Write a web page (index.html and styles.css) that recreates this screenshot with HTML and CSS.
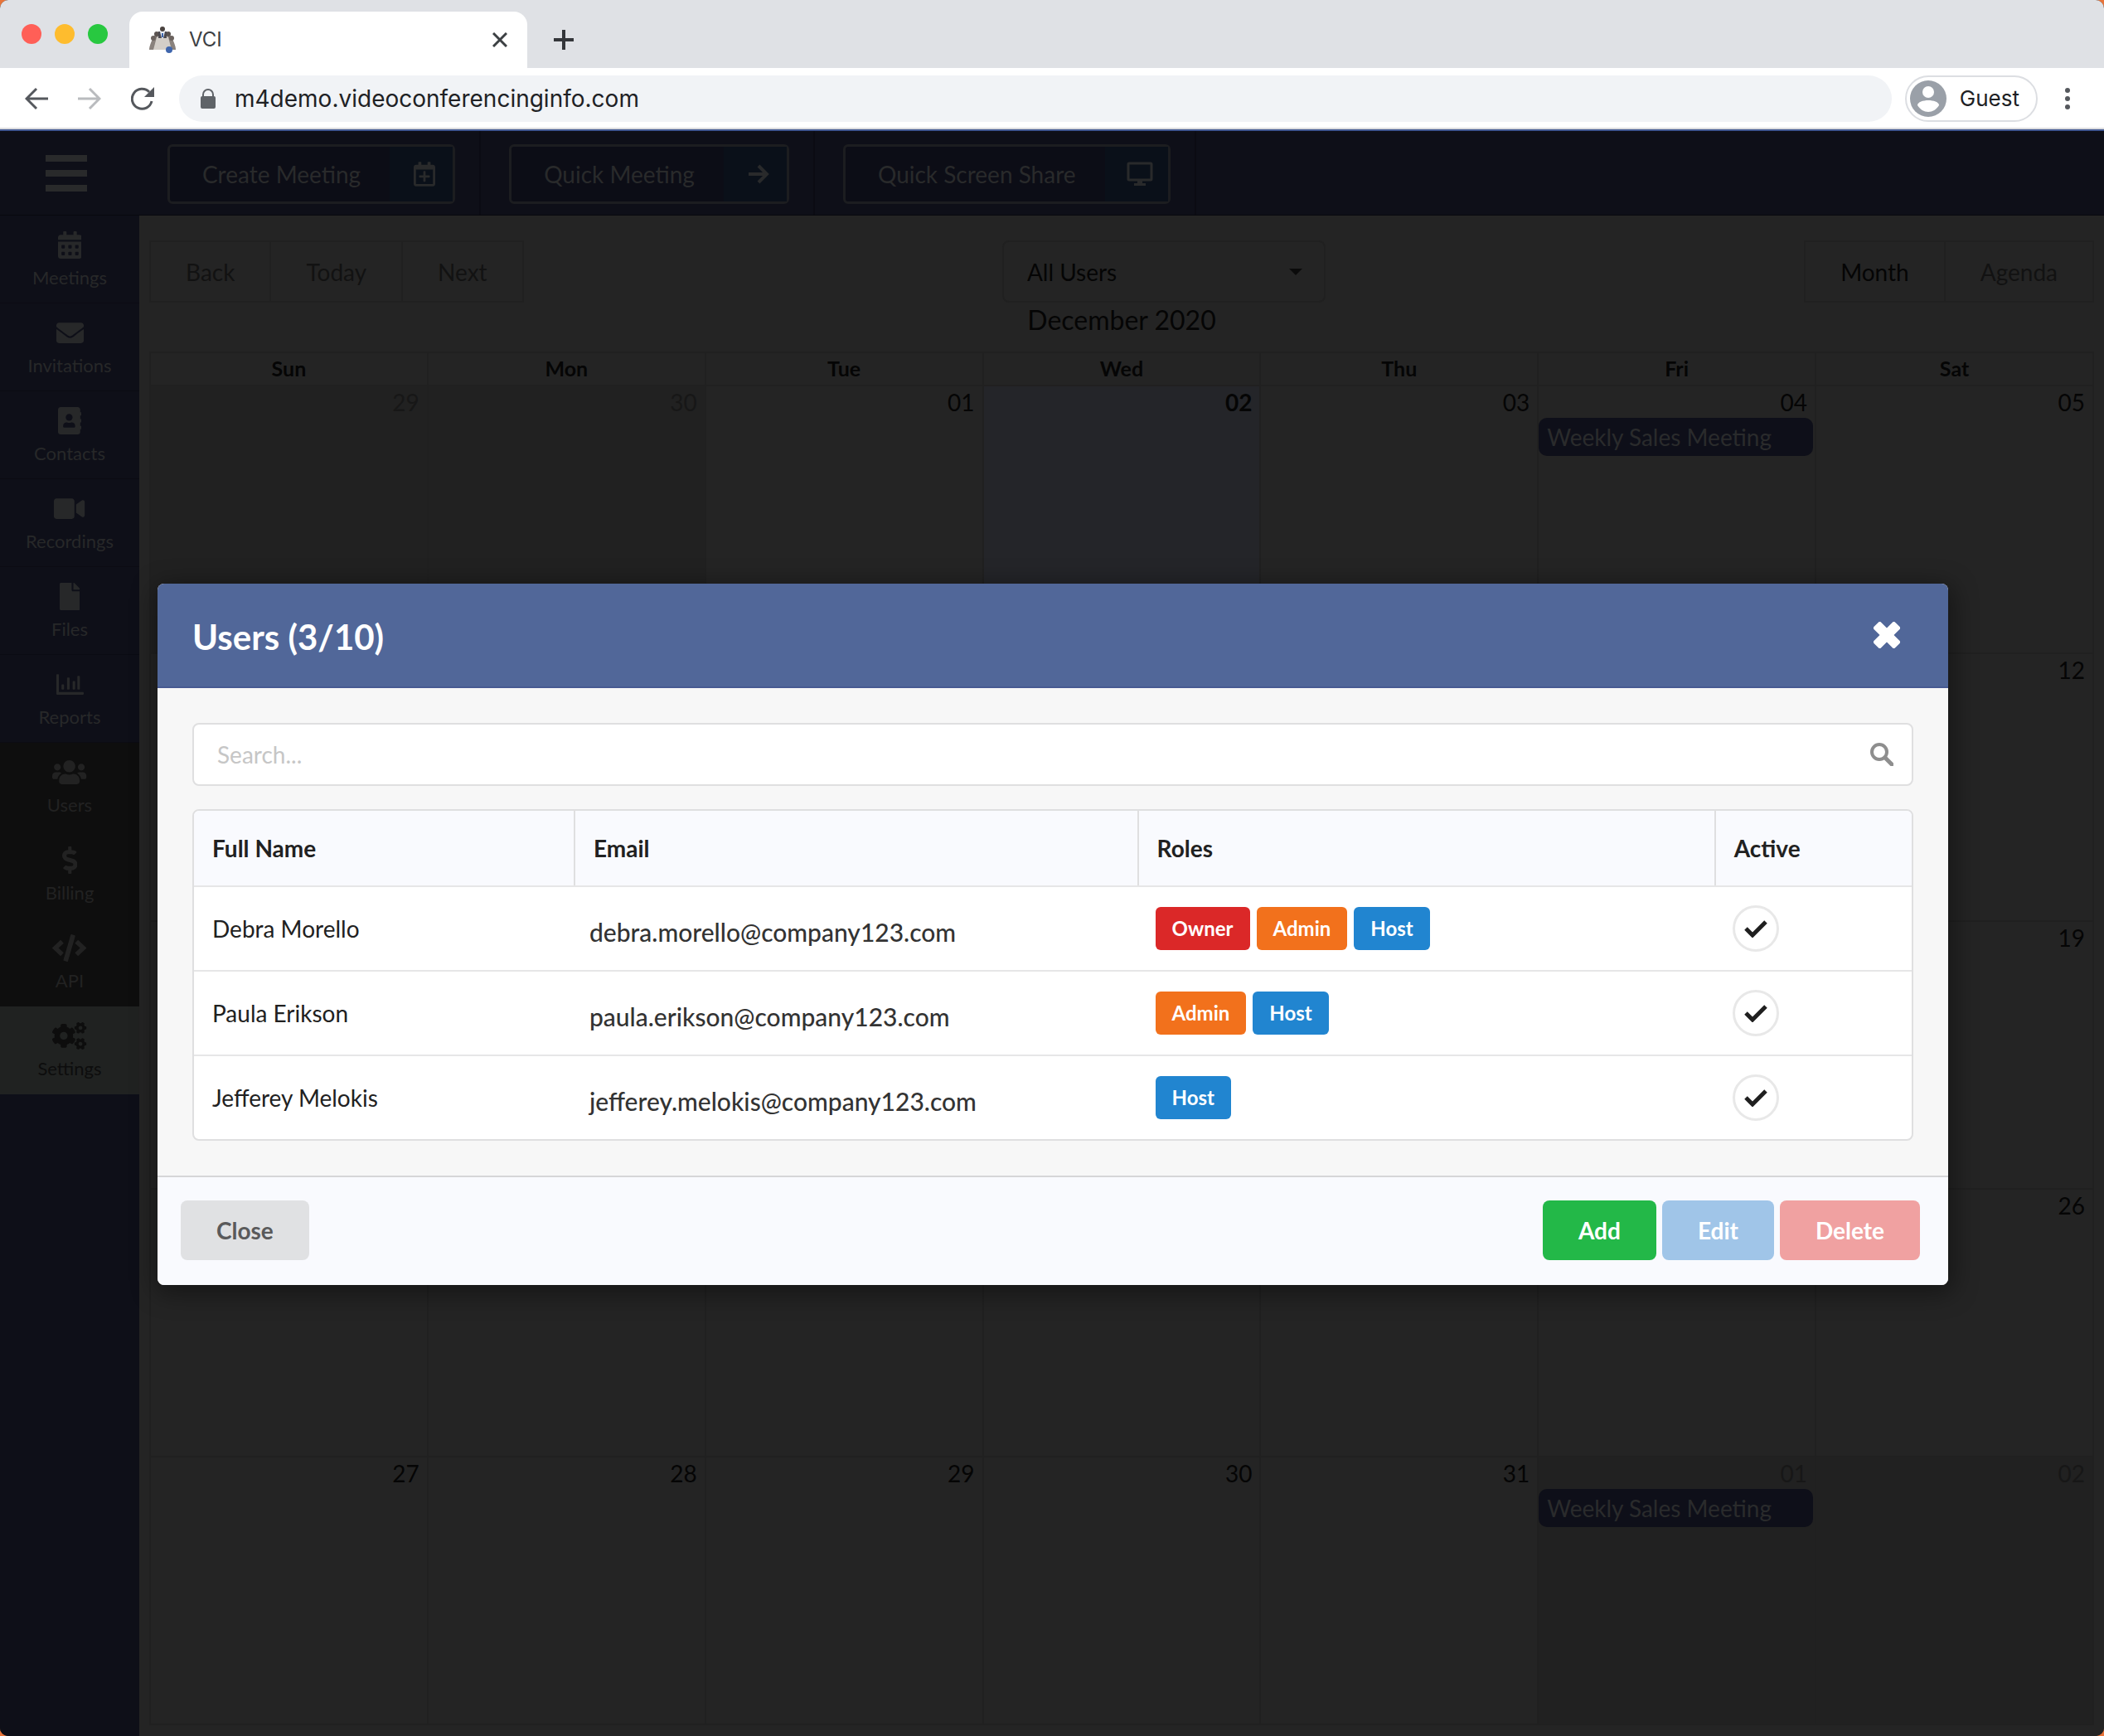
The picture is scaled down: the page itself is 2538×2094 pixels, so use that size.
FILE: index.html
```html
<!DOCTYPE html>
<html lang="en">
<head>
<meta charset="utf-8">
<meta name="viewport" content="width=device-width, initial-scale=1">
<title>VCI</title>
<link rel="stylesheet" href="styles.css">
</head>
<body>
<div class="window">
  <header class="chrome">
    <div class="tabstrip">
      <div class="lights">
        <span class="light light-red"></span>
        <span class="light light-yellow"></span>
        <span class="light light-green"></span>
      </div>
      <div class="tab">
        <svg class="favicon" viewBox="0 0 32 32" aria-hidden="true">
          <path d="M6 11l5-1-5 18H0c0-4 2-9 6-17zM26 11l-5-1 5 18h6c0-4-2-9-6-17z" fill="#8a827d"/>
          <path d="M9 13h14l4 15H5z" fill="#d3cec8"/>
          <circle cx="9" cy="9" r="3" fill="#5a5350"/><circle cx="23" cy="9" r="3" fill="#5a5350"/>
          <circle cx="5" cy="14" r="3" fill="#6b635f"/><circle cx="27" cy="14" r="3" fill="#6b635f"/>
          <path d="M11 6h10v8H11z" fill="#4c4a50"/><path d="M13 6h6l-2 8h-2z" fill="#e8eef5"/><path d="M15 8h2v5h-2z" fill="#3f66ad"/>
          <circle cx="16" cy="3" r="3" fill="#4a4340"/>
          <circle cx="24" cy="28" r="4" fill="#3f66ad"/>
        </svg>
        <span class="tab-title">VCI</span>
        <button class="plain" type="button" aria-label="Close tab">
          <svg class="tab-close" viewBox="0 0 18 18"><path d="M1 1l16 16M17 1L1 17" fill="none" stroke="#3c4043" stroke-width="3"/></svg>
        </button>
      </div>
      <button class="plain add-tab" type="button" aria-label="New tab">
        <svg class="new-tab" viewBox="0 0 24 24"><path d="M12 0v24M0 12h24" fill="none" stroke="#34363a" stroke-width="4"/></svg>
      </button>
    </div>
    <div class="toolbar">
      <button class="plain nav" type="button" aria-label="Back">
        <svg viewBox="0 0 28 28"><path d="M28 14H3M14 2L2 14l12 12" fill="none" stroke="#55585d" stroke-width="3"/></svg>
      </button>
      <button class="plain nav" type="button" aria-label="Forward">
        <svg viewBox="0 0 28 28"><path d="M0 14h25M14 2l12 12-12 12" fill="none" stroke="#b9bbbe" stroke-width="3"/></svg>
      </button>
      <button class="plain nav" type="button" aria-label="Reload">
        <svg viewBox="0 0 28 28"><path d="M25 17A12 12 0 1 1 22 6" fill="none" stroke="#55585d" stroke-width="3"/><path d="M28 0v12H16z" fill="#55585d"/></svg>
      </button>
      <label class="omnibox">
        <svg class="lock" viewBox="0 0 18 24"><path d="M2 9V7a7 7 0 0 1 14 0v2a2 2 0 0 1 2 2v11a2 2 0 0 1-2 2H2a2 2 0 0 1-2-2V11a2 2 0 0 1 2-2zm2 0h10V7A5 5 0 0 0 4 7z" fill="#5f6368"/></svg>
        <input class="url" type="text" aria-label="Address" value="m4demo.videoconferencinginfo.com">
      </label>
      <button class="guest" type="button">
        <svg class="avatar" viewBox="0 0 44 44"><circle cx="22" cy="22" r="22" fill="#9aa0a8"/><circle cx="22" cy="14" r="7" fill="#fff"/><path d="M9 30c0-4 7-6 13-6s13 2 13 6c-3 5-8 8-13 8s-10-3-13-8z" fill="#fff"/></svg>
        <span>Guest</span>
      </button>
      <button class="plain" type="button" aria-label="Menu">
        <svg class="dots" viewBox="0 0 8 28"><g fill="#55585d"><circle cx="4" cy="4" r="3"/><circle cx="4" cy="14" r="3"/><circle cx="4" cy="24" r="3"/></g></svg>
      </button>
    </div>
  </header>

  <div class="stage">
    <div class="app">
      <div class="topbar">
        <button class="plain burger" type="button" aria-label="Toggle menu"><span></span><span></span><span></span></button>
        <div class="action">
          <button class="action-btn" type="button"><span class="action-text">Create Meeting</span><span class="action-icon">
            <svg width="26" height="30" viewBox="0 0 448 512"><path d="M336 292v24c0 6.600-5.400 12-12 12h-76v76c0 6.600-5.400 12-12 12h-24c-6.600 0-12-5.400-12-12v-76h-76c-6.600 0-12-5.400-12-12v-24c0-6.600 5.400-12 12-12h76v-76c0-6.600 5.400-12 12-12h24c6.600 0 12 5.400 12 12v76h76c6.600 0 12 5.400 12 12zm112-180v352c0 26.500-21.500 48-48 48H48c-26.500 0-48-21.500-48-48V112c0-26.500 21.500-48 48-48h48V12c0-6.600 5.400-12 12-12h40c6.600 0 12 5.400 12 12v52h128V12c0-6.600 5.400-12 12-12h40c6.600 0 12 5.400 12 12v52h48c26.500 0 48 21.500 48 48zm-48 346V160H48v298c0 3.300 2.700 6 6 6h340c3.300 0 6-2.700 6-6z"/></svg>
          </span></button>
        </div>
        <div class="action">
          <button class="action-btn" type="button"><span class="action-text">Quick Meeting</span><span class="action-icon">
            <svg width="26" height="26" viewBox="0 0 26 26"><path d="M1 13h22M13 3l10 10-10 10" fill="none" stroke="currentColor" stroke-width="4"/></svg>
          </span></button>
        </div>
        <div class="action">
          <button class="action-btn" type="button"><span class="action-text">Quick Screen Share</span><span class="action-icon">
            <svg width="32" height="30" viewBox="0 0 32 30"><path d="M3 2h26a1 1 0 0 1 1 1v18a1 1 0 0 1-1 1H3a1 1 0 0 1-1-1V3a1 1 0 0 1 1-1z" fill="none" stroke="currentColor" stroke-width="3"/><path d="M13 22h6v4h4v3H9v-3h4z"/></svg>
          </span></button>
        </div>
      </div>

      <nav class="sidebar">
        <a class="side" href="#meetings"><svg viewBox="0 0 448 512"><path d="M0 464c0 26.500 21.500 48 48 48h352c26.500 0 48-21.500 48-48V192H0v272zm320-196c0-6.600 5.400-12 12-12h40c6.600 0 12 5.400 12 12v40c0 6.600-5.400 12-12 12h-40c-6.600 0-12-5.400-12-12v-40zm0 128c0-6.600 5.400-12 12-12h40c6.600 0 12 5.400 12 12v40c0 6.600-5.400 12-12 12h-40c-6.600 0-12-5.400-12-12v-40zM192 268c0-6.600 5.400-12 12-12h40c6.600 0 12 5.400 12 12v40c0 6.600-5.400 12-12 12h-40c-6.600 0-12-5.400-12-12v-40zm0 128c0-6.600 5.400-12 12-12h40c6.600 0 12 5.400 12 12v40c0 6.600-5.400 12-12 12h-40c-6.600 0-12-5.400-12-12v-40zM64 268c0-6.600 5.400-12 12-12h40c6.600 0 12 5.400 12 12v40c0 6.600-5.400 12-12 12H76c-6.600 0-12-5.400-12-12v-40zm0 128c0-6.600 5.400-12 12-12h40c6.600 0 12 5.400 12 12v40c0 6.600-5.400 12-12 12H76c-6.600 0-12-5.400-12-12v-40zM400 64h-48V16c0-8.800-7.200-16-16-16h-32c-8.800 0-16 7.200-16 16v48H160V16c0-8.800-7.200-16-16-16h-32c-8.800 0-16 7.200-16 16v48H48C21.500 64 0 85.500 0 112v48h448v-48c0-26.500-21.500-48-48-48z"/></svg><span>Meetings</span></a>
        <a class="side" href="#invitations"><svg viewBox="0 0 512 512"><path d="M502.300 190.800c3.900-3.100 9.700-.2 9.700 4.700V400c0 26.500-21.500 48-48 48H48c-26.500 0-48-21.500-48-48V195.600c0-5 5.700-7.800 9.700-4.700 22.400 17.400 52.100 39.500 154.100 113.600 21.100 15.400 56.700 47.800 92.200 47.600 35.700.3 72-32.800 92.300-47.600 102-74.100 131.600-96.300 154-113.700zM256 320c23.200.4 56.600-29.200 73.400-41.400 132.700-96.300 142.800-104.700 173.400-128.700 5.800-4.500 9.200-11.500 9.200-18.900v-19c0-26.500-21.500-48-48-48H48c-26.500 0-48 21.500-48 48v19c0 7.400 3.400 14.300 9.200 18.900 30.600 23.900 40.700 32.400 173.400 128.700 16.800 12.200 50.200 41.800 73.400 41.400z"/></svg><span>Invitations</span></a>
        <a class="side" href="#contacts"><svg viewBox="0 0 448 512"><path d="M436 160c6.600 0 12-5.400 12-12v-40c0-6.600-5.400-12-12-12h-20V48c0-26.500-21.500-48-48-48H48C21.500 0 0 21.500 0 48v416c0 26.500 21.500 48 48 48h320c26.500 0 48-21.500 48-48v-48h20c6.600 0 12-5.400 12-12v-40c0-6.600-5.400-12-12-12h-20v-64h20c6.600 0 12-5.400 12-12v-40c0-6.600-5.400-12-12-12h-20v-64h20zm-228-32c35.300 0 64 28.700 64 64s-28.700 64-64 64-64-28.700-64-64 28.700-64 64-64zm112 236.800c0 10.600-10 19.200-22.400 19.200H118.400C106 384 96 375.400 96 364.800v-19.200c0-31.800 30.100-57.600 67.200-57.600h5c12.300 5.100 25.700 8 39.800 8s27.600-2.900 39.800-8h5c37.100 0 67.200 25.800 67.200 57.600v19.200z"/></svg><span>Contacts</span></a>
        <a class="side" href="#recordings"><svg viewBox="0 0 576 512"><path d="M336.200 64H47.800C21.400 64 0 85.400 0 111.800v288.400C0 426.600 21.400 448 47.800 448h288.400c26.400 0 47.800-21.400 47.800-47.800V111.800c0-26.400-21.400-47.800-47.800-47.800zm189.400 37.700L416 177.300v157.400l109.600 75.500c21.200 14.600 50.400-.3 50.400-25.800V127.500c0-25.400-29.100-40.400-50.400-25.800z"/></svg><span>Recordings</span></a>
        <a class="side" href="#files"><svg viewBox="0 0 384 512"><path d="M224 136V0H24C10.700 0 0 10.700 0 24v464c0 13.300 10.700 24 24 24h336c13.300 0 24-10.700 24-24V160H248c-13.200 0-24-10.800-24-24zm160-14.100v6.100H256V0h6.100c6.400 0 12.500 2.500 17 7l97.900 98c4.500 4.500 7 10.600 7 16.900z"/></svg><span>Files</span></a>
        <a class="side" href="#reports"><svg viewBox="0 0 512 512"><path d="M500 400c6.600 0 12 5.400 12 12v24c0 6.600-5.400 12-12 12H12c-6.600 0-12-5.400-12-12V76c0-6.600 5.400-12 12-12h24c6.600 0 12 5.400 12 12v324h452zM108 352h24c6.600 0 12-5.400 12-12v-72c0-6.600-5.400-12-12-12h-24c-6.600 0-12 5.400-12 12v72c0 6.600 5.400 12 12 12zm104 0h24c6.600 0 12-5.400 12-12V140c0-6.600-5.400-12-12-12h-24c-6.600 0-12 5.400-12 12v200c0 6.600 5.400 12 12 12zm104 0h24c6.600 0 12-5.400 12-12V204c0-6.600-5.400-12-12-12h-24c-6.600 0-12 5.400-12 12v136c0 6.600 5.400 12 12 12zm88 0h24c6.600 0 12-5.400 12-12V108c0-6.600-5.400-12-12-12h-24c-6.600 0-12 5.400-12 12v232c0 6.600 5.400 12 12 12z"/></svg><span>Reports</span></a>
        <a class="side side-admin" href="#users"><svg viewBox="0 0 640 512"><path d="M96 224c35.300 0 64-28.700 64-64s-28.700-64-64-64-64 28.700-64 64 28.700 64 64 64zm448 0c35.300 0 64-28.700 64-64s-28.700-64-64-64-64 28.700-64 64 28.700 64 64 64zm32 32h-64c-17.600 0-33.500 7.100-45.100 18.600 40.300 22.100 68.900 62 75.100 109.400h66c17.700 0 32-14.300 32-32v-32c0-35.300-28.700-64-64-64zm-256 0c61.900 0 112-50.100 112-112S381.900 32 320 32 208 82.100 208 144s50.100 112 112 112zm76.800 32h-8.300c-20.800 10-43.900 16-68.500 16s-47.600-6-68.500-16h-8.300C179.600 288 128 339.600 128 403.200V432c0 26.500 21.500 48 48 48h288c26.500 0 48-21.500 48-48v-28.800c0-63.600-51.600-115.200-115.200-115.200zm-223.700-13.400C161.500 263.100 145.600 256 128 256H64c-35.300 0-64 28.700-64 64v32c0 17.700 14.300 32 32 32h65.900c6.300-47.400 34.900-87.300 75.200-109.400z"/></svg><span>Users</span></a>
        <a class="side side-admin" href="#billing"><svg viewBox="0 0 288 512"><path d="M209.200 233.400l-108-31.600C88.700 198.200 80 186.500 80 173.500c0-16.300 13.200-29.500 29.500-29.500h66.300c12.200 0 24.200 3.700 34.200 10.500 6.100 4.100 14.300 3.100 19.500-2l34.800-34c7.100-6.900 6.100-18.400-1.800-24.500C238 74.800 207.400 64.100 176 64V16c0-8.800-7.200-16-16-16h-32c-8.800 0-16 7.200-16 16v48h-2.500C45.800 64-5.400 118.700.5 183.600c4.200 46.100 39.400 83.600 83.800 96.600l102.500 30c12.500 3.700 21.200 15.300 21.200 28.300 0 16.300-13.200 29.500-29.500 29.500h-66.300C100 368 88 364.300 78 357.500c-6.100-4.100-14.300-3.100-19.500 2l-34.800 34c-7.100 6.900-6.100 18.400 1.800 24.500 24.500 19.200 55.100 29.900 86.500 30v48c0 8.800 7.200 16 16 16h32c8.800 0 16-7.200 16-16v-48.200c46.600-.9 90.300-28.600 105.700-72.700 21.500-61.600-14.600-124.800-72.500-141.700z"/></svg><span>Billing</span></a>
        <a class="side side-admin" href="#api"><svg viewBox="0 0 640 512"><path d="M278.900 511.500l-61-17.700c-6.400-1.800-10-8.500-8.200-14.900L346.200 8.700c1.800-6.400 8.500-10 14.900-8.200l61 17.700c6.400 1.800 10 8.500 8.200 14.900L293.800 503.300c-1.900 6.400-8.500 10.100-14.900 8.200zm-114-112.200l43.500-46.400c4.600-4.900 4.300-12.700-.8-17.200L117 256l90.600-79.700c5.100-4.500 5.500-12.300.8-17.200l-43.500-46.400c-4.500-4.800-12.100-5.100-17-.5L3.800 247.200c-5.100 4.700-5.100 12.800 0 17.500l144.100 135.100c4.900 4.600 12.500 4.400 17-.5zm327.200.6l144.100-135.100c5.100-4.700 5.100-12.800 0-17.500L492.100 112.100c-4.800-4.500-12.400-4.300-17 .5L431.600 159c-4.600 4.900-4.300 12.700.8 17.200L523 256l-90.600 79.700c-5.100 4.500-5.500 12.300-.8 17.200l43.500 46.400c4.500 4.900 12.100 5.100 17 .6z"/></svg><span>API</span></a>
        <a class="side side-active" href="#settings"><svg viewBox="0 0 640 512"><path id="small-cog" d="M512.100 191l-8.200 14.300c-3 5.300-9.400 7.500-15.100 5.400-11.800-4.400-22.600-10.700-32.100-18.600-4.600-3.800-5.800-10.500-2.800-15.700l8.200-14.300c-6.900-8-12.300-17.300-15.900-27.400h-16.500c-6 0-11.200-4.300-12.200-10.300-2-12-2.100-24.600 0-37.100 1-6 6.200-10.400 12.200-10.400h16.500c3.600-10.100 9-19.400 15.900-27.400l-8.200-14.300c-3-5.200-1.900-11.900 2.800-15.700 9.500-7.900 20.400-14.200 32.100-18.600 5.700-2.100 12.100.1 15.100 5.400l8.200 14.300c10.500-1.900 21.200-1.900 31.700 0L552 6.300c3-5.300 9.400-7.500 15.100-5.400 11.800 4.400 22.600 10.700 32.100 18.600 4.600 3.800 5.800 10.500 2.800 15.700l-8.200 14.300c6.900 8 12.300 17.300 15.900 27.400h16.500c6 0 11.200 4.300 12.200 10.300 2 12 2.100 24.600 0 37.100-1 6-6.200 10.400-12.200 10.400h-16.500c-3.600 10.100-9 19.400-15.900 27.400l8.200 14.300c3 5.200 1.900 11.900-2.800 15.700-9.500 7.900-20.400 14.200-32.100 18.600-5.700 2.100-12.100-.1-15.100-5.400l-8.200-14.300c-10.400 1.900-21.200 1.900-31.700 0zm-10.500-58.800c38.500 29.600 82.400-14.300 52.800-52.800-38.500-29.700-82.400 14.300-52.800 52.800z"/><use href="#small-cog" transform="translate(0 299)"/><path d="M386.300 286.100l33.700 16.800c10.100 5.800 14.500 18.100 10.500 29.100-8.900 24.200-26.400 46.400-42.600 65.800-7.400 8.900-20.200 11.100-30.300 5.300l-29.100-16.800c-16 13.700-34.600 24.600-54.900 31.700v33.600c0 11.600-8.300 21.600-19.700 23.600-24.600 4.200-50.400 4.400-75.900 0-11.500-2-20-11.900-20-23.600V418c-20.300-7.200-38.900-18-54.900-31.700L74 403c-10 5.800-22.900 3.600-30.300-5.300-16.200-19.400-33.300-41.600-42.200-65.700-4-10.900.4-23.200 10.500-29.100l33.300-16.800c-3.900-20.900-3.900-42.400 0-63.400L12 205.800c-10.100-5.800-14.600-18.100-10.500-29 8.900-24.200 26-46.400 42.200-65.800 7.400-8.900 20.200-11.100 30.300-5.300l29.100 16.800c16-13.700 34.600-24.600 54.900-31.700V57.100c0-11.500 8.200-21.500 19.600-23.500 24.600-4.200 50.500-4.400 76-.1 11.500 2 20 11.900 20 23.600v33.600c20.300 7.200 38.900 18 54.900 31.700l29.100-16.800c10-5.800 22.900-3.600 30.300 5.300 16.200 19.400 33.200 41.600 42.100 65.800 4 10.900.1 23.200-10 29.100l-33.700 16.800c3.900 21 3.900 42.500 0 63.500zm-117.600 21.100c59.200-77-28.700-164.900-105.700-105.700-59.200 77 28.700 164.900 105.700 105.700z"/></svg><span>Settings</span></a>
      </nav>

      <main class="content">
        <div class="cal-tools">
          <div class="group">
            <button type="button">Back</button><button type="button">Today</button><button type="button">Next</button>
          </div>
          <div class="user-pick">
            <select class="user-select" aria-label="Users shown"><option>All Users</option></select>
            <svg class="caret" viewBox="0 0 16 8"><path d="M0 0h16L8 8z"/></svg>
          </div>
          <div class="group">
            <button class="on" type="button">Month</button><button type="button">Agenda</button>
          </div>
        </div>
        <h1 class="month">December 2020</h1>
        <table class="calendar">
          <thead><tr><th>Sun</th><th>Mon</th><th>Tue</th><th>Wed</th><th>Thu</th><th>Fri</th><th>Sat</th></tr></thead>
          <tbody>
            <tr><td class="off">29</td><td class="off">30</td><td>01</td><td class="today">02</td><td>03</td><td>04<a class="event" href="#event">Weekly Sales Meeting</a></td><td>05</td></tr>
            <tr><td></td><td></td><td></td><td></td><td></td><td></td><td>12</td></tr>
            <tr><td></td><td></td><td></td><td></td><td></td><td></td><td>19</td></tr>
            <tr><td></td><td></td><td></td><td></td><td></td><td></td><td>26</td></tr>
            <tr><td>27</td><td>28</td><td>29</td><td>30</td><td>31</td><td class="off">01<a class="event" href="#event">Weekly Sales Meeting</a></td><td class="off">02</td></tr>
          </tbody>
        </table>
      </main>
    </div>

    <div class="overlay">
      <section class="modal" role="dialog" aria-labelledby="modal-title">
        <header class="modal-head">
          <h2 id="modal-title">Users (3/10)</h2>
          <button class="plain" type="button" aria-label="Close dialog">
            <svg class="modal-x" viewBox="-16 -16 32 32"><g fill="#fff"><rect x="-18" y="-6" width="36" height="12" rx="2" transform="rotate(45)"/><rect x="-18" y="-6" width="36" height="12" rx="2" transform="rotate(-45)"/></g></svg>
          </button>
        </header>
        <div class="modal-body">
          <label class="search">
            <input type="text" placeholder="Search..." aria-label="Search users">
            <svg viewBox="0 0 28 28"><circle cx="11" cy="11" r="9" fill="none" stroke="#8e8e8e" stroke-width="4"/><path d="M18 18l8 8" stroke="#8e8e8e" stroke-width="5" stroke-linecap="round"/></svg>
          </label>
          <table class="users">
            <colgroup><col class="c-name"><col class="c-email"><col class="c-roles"><col></colgroup>
            <thead><tr><th>Full Name</th><th>Email</th><th>Roles</th><th>Active</th></tr></thead>
            <tbody>
              <tr><td>Debra Morello</td><td class="email">debra.morello@company123.com</td><td><div class="roles"><span class="role owner">Owner</span><span class="role admin">Admin</span><span class="role host">Host</span></div></td><td><span class="check"><svg viewBox="0 0 28 22"><path d="M2 11l8 8L26 3" fill="none" stroke="#1f1f1f" stroke-width="5"/></svg></span></td></tr>
              <tr><td>Paula Erikson</td><td class="email">paula.erikson@company123.com</td><td><div class="roles"><span class="role admin">Admin</span><span class="role host">Host</span></div></td><td><span class="check"><svg viewBox="0 0 28 22"><path d="M2 11l8 8L26 3" fill="none" stroke="#1f1f1f" stroke-width="5"/></svg></span></td></tr>
              <tr><td>Jefferey Melokis</td><td class="email">jefferey.melokis@company123.com</td><td><div class="roles"><span class="role host">Host</span></div></td><td><span class="check"><svg viewBox="0 0 28 22"><path d="M2 11l8 8L26 3" fill="none" stroke="#1f1f1f" stroke-width="5"/></svg></span></td></tr>
            </tbody>
          </table>
        </div>
        <footer class="modal-foot">
          <button class="btn btn-close" type="button">Close</button>
          <div class="foot-right">
            <button class="btn btn-add" type="button">Add</button>
            <button class="btn btn-edit" type="button">Edit</button>
            <button class="btn btn-delete" type="button">Delete</button>
          </div>
        </footer>
      </section>
    </div>
  </div>
</div>
</body>
</html>
```
FILE: styles.css
```css
* { box-sizing: border-box; }

body {
  margin: 0;
  background: #e8743a;
  font-family: Lato, "Liberation Sans", sans-serif;
  font-size: 28px;
  line-height: 36px;
}

button, input, select { font: inherit; color: inherit; margin: 0; }
a { color: inherit; text-decoration: none; }
svg { display: block; flex: none; }

.plain { padding: 0; border: 0; background: none; }

.window {
  display: flex;
  flex-direction: column;
  min-height: 100vh;
  border-radius: 10px;
  overflow: hidden;
  background: #242424;
}

/* Browser chrome */
.chrome { font-family: Inter, Roboto, sans-serif; color: #3c4043; }

.tabstrip {
  display: flex;
  align-items: center;
  height: 82px;
  padding-left: 26px;
  background: #dfe1e5;
}

.lights { display: flex; gap: 16px; margin-right: 26px; }
.light { width: 24px; height: 24px; border-radius: 50%; }
.light-red { background: #ff5f57; }
.light-yellow { background: #febc2e; }
.light-green { background: #28c840; }

.tab {
  display: flex;
  align-items: center;
  align-self: flex-end;
  width: 480px;
  height: 68px;
  margin-right: 32px;
  padding: 0 24px;
  border-radius: 16px 16px 0 0;
  background: #fff;
  font-size: 24px;
}
.favicon { width: 32px; height: 32px; }
.tab-title { flex: 1; margin-left: 16px; }
.tab-close { width: 18px; height: 18px; }
.add-tab { padding-top: 14px; }
.new-tab { width: 24px; height: 24px; }

.toolbar {
  display: flex;
  align-items: center;
  height: 76px;
  padding: 0 40px 0 30px;
  border-bottom: 2px solid #3f5690;
  box-shadow: inset 0 -2px #dcdcdf;
  background: #fff;
}
.nav { margin-right: 36px; }
.nav svg { width: 28px; height: 28px; }
.nav:nth-child(3) { margin-right: 30px; }

.omnibox {
  display: flex;
  flex: 1;
  align-items: center;
  gap: 23px;
  height: 56px;
  padding: 0 26px;
  border-radius: 28px;
  background: #f1f3f6;
}
.lock { width: 18px; height: 24px; }
.url {
  flex: 1;
  padding: 0;
  border: 0;
  background: none;
  color: #202124;
  font-size: 28px;
}

.guest {
  display: flex;
  align-items: center;
  gap: 16px;
  height: 56px;
  margin: 0 32px 0 16px;
  padding: 0 20px 0 4px;
  border: 2px solid #dcdee2;
  border-radius: 28px;
  background: #fff;
  color: #202124;
  font-size: 26px;
}
.avatar { width: 44px; height: 44px; }
.dots { width: 8px; height: 28px; }

/* The dimmed app and the dialog share one grid cell */
.stage { display: grid; flex: 1; }
.app, .overlay { grid-area: 1 / 1; }

.app {
  display: grid;
  grid-template-columns: 168px 1fr;
  grid-template-rows: 102px 1fr;
  background: #242424;
}

.topbar {
  display: flex;
  grid-column: 1 / 3;
  border-bottom: 1px solid #08080e;
  background: #0e0f18;
  color: #292a2b;
}

.burger {
  display: flex;
  flex-direction: column;
  align-items: center;
  justify-content: center;
  gap: 10px;
  width: 168px;
  padding-right: 8px;
}
.burger span { width: 50px; height: 8px; background: #292a2b; }

.action {
  display: flex;
  align-items: center;
  padding: 2px 29px 0 34px;
  border-right: 2px solid #0b0b13;
}
.action-btn {
  display: flex;
  height: 72px;
  padding: 0 0 0 39px;
  border: 3px solid #1c1d20;
  border-radius: 6px;
  background: #0c0d16;
}
.action-text { align-self: center; margin-right: 35px; }
.action-icon {
  display: flex;
  align-items: center;
  justify-content: center;
  width: 76px;
  height: 66px;
  padding-left: 8px;
  background: #0a1019;
  fill: currentColor;
}

.sidebar {
  display: flex;
  flex-direction: column;
  background: #0e0f18;
}
.side {
  display: flex;
  flex-direction: column;
  align-items: center;
  gap: 9px;
  height: 106px;
  padding-top: 19px;
  border-bottom: 1px solid #0b0b13;
  color: #272829;
  font-size: 22px;
  line-height: 28px;
  fill: currentColor;
}
.side svg { height: 33px; }
.side-admin { border-color: #0e0e0e; background: #0e0e0e; color: #222; }
.side-active { border-color: #202221; background: #202221; color: #0d0d0d; }

.content {
  display: flex;
  flex-direction: column;
  padding: 30px 12px 13px 12px;
  color: #050505;
}

.cal-tools { display: flex; align-items: center; justify-content: space-between; }
.group { display: flex; }
.group button {
  height: 75px;
  padding: 0 42px;
  border: 2px solid #202020;
  background: #242424;
  color: #121212;
}
.group button + button { border-left: 0; }
.group .on { color: #050505; }

.user-pick { display: grid; align-items: center; }
.user-select {
  grid-area: 1 / 1;
  appearance: none;
  width: 390px;
  height: 75px;
  padding: 0 28px;
  border: 2px solid #202020;
  border-radius: 8px;
  background: #242424;
}
.caret {
  grid-area: 1 / 1;
  justify-self: end;
  width: 16px;
  height: 8px;
  margin-right: 28px;
  fill: #0b0b0b;
  pointer-events: none;
}

.month {
  margin: 0;
  font-size: 32px;
  font-weight: 400;
  line-height: 42px;
  text-align: center;
}

.calendar {
  flex: 1;
  width: 100%;
  margin-top: 17px;
  border-collapse: collapse;
  table-layout: fixed;
}
.calendar th {
  height: 40px;
  padding: 0 0 2px;
  border: 2px solid #202020;
  font-size: 25px;
}
.calendar td {
  height: 120px;
  padding: 1px 9px 0 0;
  border: 2px solid #202020;
  text-align: right;
  vertical-align: top;
}
.calendar .off { background: #212121; color: #171717; }
.calendar .today { background: #242529; font-weight: 700; }
.event {
  display: block;
  height: 46px;
  margin: 1px -7px 0 0;
  padding: 5px 10px;
  border-radius: 10px;
  background: #0e0f19;
  color: #2a2b2c;
  text-align: left;
}

/* Dialog */
.overlay { display: grid; align-items: center; padding: 2px 188px 0 190px; z-index: 1; }

.modal {
  border-radius: 8px;
  overflow: hidden;
  background: #f7f7f7;
  box-shadow: 2px 6px 30px 4px rgba(0, 0, 0, .4);
  color: #212121;
}

.modal-head {
  display: flex;
  align-items: center;
  justify-content: space-between;
  height: 126px;
  padding: 0 58px 0 42px;
  border-bottom: 2px solid #475a92;
  background: #516799;
  color: #fff;
}
.modal-head h2 { margin: 0; padding-top: 4px; font-size: 42px; line-height: 52px; }
.modal-x { width: 32px; height: 32px; }

.modal-body { padding: 42px; }

.search {
  display: flex;
  align-items: center;
  height: 76px;
  margin-bottom: 28px;
  padding: 0 22px 0 28px;
  border: 2px solid #dfdfe0;
  border-radius: 8px;
  background: #fff;
}
.search input { flex: 1; padding: 0; border: 0; outline: 0; background: none; }
.search input::placeholder { color: #c6c6c6; }
.search svg { width: 28px; height: 28px; }

.users {
  width: 100%;
  border: 2px solid #dfdfe0;
  border-radius: 8px;
  border-spacing: 0;
  overflow: hidden;
  table-layout: fixed;
  background: #fff;
}
.c-name { width: 22.2%; }
.c-email { width: 32.8%; }
.c-roles { width: 33.6%; }
.users th {
  height: 90px;
  padding: 0 22px;
  border-right: 2px solid #dfdfe0;
  background: #f9fafe;
  text-align: left;
}
.users th:last-child { border-right: 0; }
.users td {
  height: 102px;
  padding: 0 20px;
  border-top: 2px solid #e6e6e7;
}
.users td:first-child { padding-left: 22px; }
.users .email { padding: 8px 0 0 17px; color: #333; font-size: 30px; font-weight: 500; }
.roles { display: flex; gap: 8px; }
.role {
  padding: 0 20px;
  border-radius: 6px;
  color: #fff;
  font-size: 24px;
  font-weight: 700;
  line-height: 52px;
}
.owner { background: #db2828; }
.admin { background: #f2711c; }
.host { background: #2185d0; }
.check {
  display: grid;
  place-items: center;
  width: 56px;
  height: 56px;
  border: 3px solid #e8e8e8;
  border-radius: 50%;
}
.check svg { width: 28px; height: 22px; }

.modal-foot {
  display: flex;
  justify-content: space-between;
  padding: 28px 34px 30px 28px;
  border-top: 2px solid #d6d6d8;
  background: #f9fafe;
}
.foot-right { display: flex; gap: 7px; }
.btn {
  height: 72px;
  padding: 0 43px;
  border: 0;
  border-radius: 8px;
  color: #fff;
  font-weight: 700;
}
.btn-close { background: #e0e1e3; color: #5a5a5b; }
.btn-add { background: #23b848; }
.btn-edit { background: #a0c5e8; }
.btn-delete { background: #f0a1a1; }
```
